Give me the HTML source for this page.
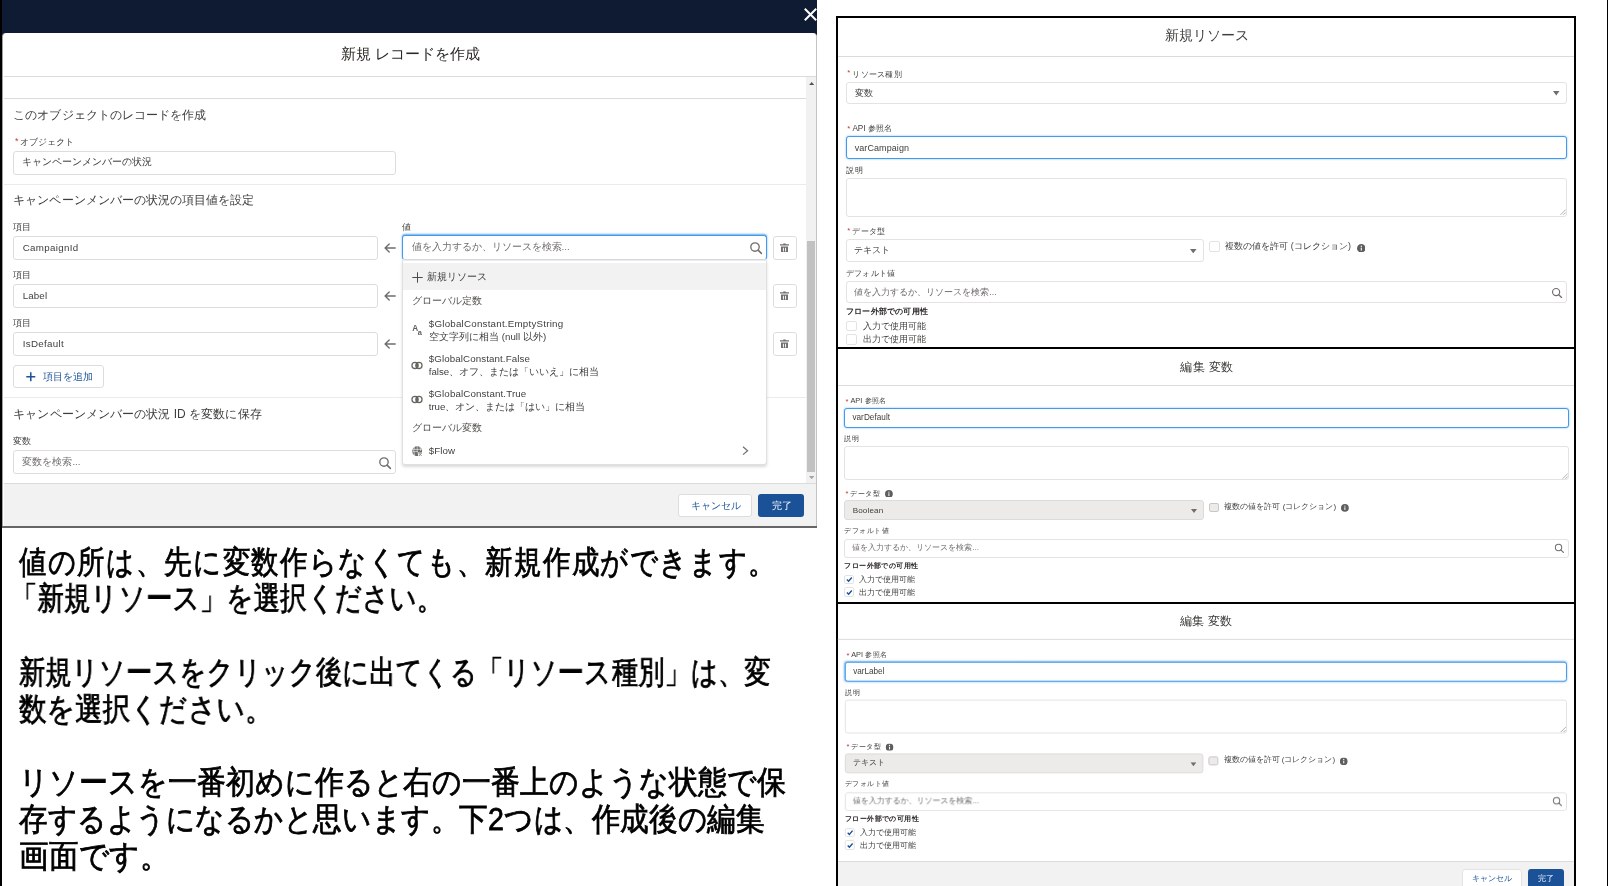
<!DOCTYPE html>
<html lang="ja"><head><meta charset="utf-8"><title>新規 レコードを作成</title>
<style>
html,body{margin:0;padding:0;background:#fff;}
body{width:1608px;height:886px;position:relative;overflow:hidden;font-family:"Liberation Sans",sans-serif;}
#page{position:absolute;left:0;top:0;width:1608px;height:886px;will-change:transform;}
.b{position:absolute;box-sizing:border-box;}
.j{position:absolute;white-space:nowrap;text-align:justify;text-align-last:justify;overflow:visible;}
.l{position:absolute;white-space:nowrap;}
.big{position:absolute;white-space:nowrap;text-align:justify;text-align-last:justify;transform-origin:0 0;font-size:32px;line-height:36px;color:#000;left:19px;-webkit-text-stroke:0.8px #000;}
.inp{border:1px solid #dfdddc;border-radius:3px;background:#fff;}
.foc{border:1px solid #3f9bef;border-radius:3px;background:#fff;box-shadow:0 0 2px rgba(0,112,210,.5);}
.dis{border:1px solid #dddbda;border-radius:3px;background:#ecebea;}
.cb{border:1px solid #e2e0df;border-radius:2px;background:#fff;}
.cbd{border:1px solid #c9c7c5;border-radius:2px;background:#ecebea;}
.req{color:#c23934;}
.r{border-color:#e5e3e2;}
</style></head><body><div id="page">

<section aria-label="新規 レコードを作成"><!-- left: flow builder modal -->
<div class="b" style="left:0.0px;top:0.0px;width:816.5px;height:40.0px;background:#0e1b32;"></div>
<svg class="b" style="left:803.5px;top:8.0px;" width="13.0" height="13.0" viewBox="0 0 13 13"><path d="M0.8 0.8 L12.2 12.2 M12.2 0.8 L0.8 12.2" stroke="#fff" stroke-width="2" stroke-linecap="butt"/></svg>
<div class="b" style="left:2.0px;top:33.0px;width:815.0px;height:495.0px;background:#fff;border-radius:4px 4px 0 0;border-left:1.5px solid #a0a0a0;border-right:1px solid #c4c4c4;"></div>
<div class="b" style="left:2.0px;top:525.6px;width:815.0px;height:2.4px;background:#666;"></div>
<div class="j" style="left:340.6px;top:44.0px;width:139.0px;font-size:15px;line-height:20px;color:#2b2826;">新規 レコードを作成</div>
<div class="b" style="left:3.5px;top:75.5px;width:812.5px;height:1.5px;background:#dddbda;"></div>
<div class="b" style="left:3.5px;top:98.0px;width:802.9px;height:1.0px;background:#dddbda;"></div>
<div class="b" style="left:806.4px;top:77.0px;width:9.6px;height:406.3px;background:#f1f1f1;"></div>
<div class="b" style="left:807.4px;top:240.7px;width:7.6px;height:231.1px;background:#c1c1c1;"></div>
<svg class="b" style="left:808.5px;top:81.5px;" width="5.4" height="3.2" viewBox="0 0 5.4 3.2"><path d="M0 3.2 L2.7 0 L5.4 3.2 Z" fill="#505050"/></svg>
<svg class="b" style="left:808.5px;top:475.8px;" width="5.4" height="3.2" viewBox="0 0 5.4 3.2"><path d="M0 0 L2.7 3.2 L5.4 0 Z" fill="#a3a3a3"/></svg>
<div class="j" style="left:13.3px;top:107.4px;width:193.0px;font-size:12px;line-height:16px;color:#3e3e3c;">このオブジェクトのレコードを作成</div>
<div class="l req" style="left:15px;top:133.7px;font-size:9px;line-height:14px;">*</div>
<div class="j" style="left:19.7px;top:135.0px;width:54.5px;font-size:9px;line-height:14px;color:#3e3e3c;">オブジェクト</div>
<div class="b inp" style="left:13.0px;top:150.5px;width:383.0px;height:24.0px;"></div>
<div class="j" style="left:22.4px;top:154.9px;width:127.8px;font-size:9.7px;line-height:14px;color:#3e3e3c;">キャンペーンメンバーの状況</div>
<div class="b" style="left:3.5px;top:184.2px;width:802.9px;height:1.0px;background:#ecebea;"></div>
<div class="j" style="left:13.3px;top:192.4px;width:241.0px;font-size:12px;line-height:16px;color:#3e3e3c;">キャンペーンメンバーの状況の項目値を設定</div>
<div class="j" style="left:13.3px;top:221.2px;width:17.5px;font-size:8.8px;line-height:12px;color:#3e3e3c;">項目</div>
<div class="b inp" style="left:13.0px;top:236.0px;width:365.0px;height:24.0px;"></div>
<div class="l" style="left:22.7px;top:240.92px;font-size:9.75px;line-height:14px;color:#3e3e3c;letter-spacing:0.313px;">CampaignId</div>
<svg class="b" style="left:384.0px;top:242.8px;" width="12.0" height="10.0" viewBox="0 0 12 10"><path d="M11.2 5 H1.2 M5.2 0.9 L1.1 5 L5.2 9.1" fill="none" stroke="#706e6b" stroke-width="1.35" stroke-linecap="round" stroke-linejoin="round"/></svg>
<div class="b inp" style="left:772.5px;top:236.0px;width:24.0px;height:24.0px;"></div>
<svg class="b" style="left:780.1px;top:242.8px;" width="9.0" height="9.6" viewBox="0 0 9 9.6"><path d="M3.3 1.2 V0.4 H5.7 V1.2 H9 V2.4 H0 V1.2 Z" fill="#706e6b"/><path d="M1 3.6 H8 V9 Q8 9.6 7.4 9.6 H1.6 Q1 9.6 1 9 Z M2.9 4.7 V8.4 H3.9 V4.7 Z M5.1 4.7 V8.4 H6.1 V4.7 Z" fill="#706e6b" fill-rule="evenodd"/></svg>
<div class="j" style="left:13.3px;top:269.2px;width:17.5px;font-size:8.8px;line-height:12px;color:#3e3e3c;">項目</div>
<div class="b inp" style="left:13.0px;top:284.0px;width:365.0px;height:24.0px;"></div>
<div class="l" style="left:22.7px;top:288.92px;font-size:9.75px;line-height:14px;color:#3e3e3c;letter-spacing:0.129px;">Label</div>
<svg class="b" style="left:384.0px;top:290.8px;" width="12.0" height="10.0" viewBox="0 0 12 10"><path d="M11.2 5 H1.2 M5.2 0.9 L1.1 5 L5.2 9.1" fill="none" stroke="#706e6b" stroke-width="1.35" stroke-linecap="round" stroke-linejoin="round"/></svg>
<div class="b inp" style="left:772.5px;top:284.0px;width:24.0px;height:24.0px;"></div>
<svg class="b" style="left:780.1px;top:290.8px;" width="9.0" height="9.6" viewBox="0 0 9 9.6"><path d="M3.3 1.2 V0.4 H5.7 V1.2 H9 V2.4 H0 V1.2 Z" fill="#706e6b"/><path d="M1 3.6 H8 V9 Q8 9.6 7.4 9.6 H1.6 Q1 9.6 1 9 Z M2.9 4.7 V8.4 H3.9 V4.7 Z M5.1 4.7 V8.4 H6.1 V4.7 Z" fill="#706e6b" fill-rule="evenodd"/></svg>
<div class="j" style="left:13.3px;top:317.2px;width:17.5px;font-size:8.8px;line-height:12px;color:#3e3e3c;">項目</div>
<div class="b inp" style="left:13.0px;top:332.0px;width:365.0px;height:24.0px;"></div>
<div class="l" style="left:22.7px;top:336.92px;font-size:9.75px;line-height:14px;color:#3e3e3c;letter-spacing:0.325px;">IsDefault</div>
<svg class="b" style="left:384.0px;top:338.8px;" width="12.0" height="10.0" viewBox="0 0 12 10"><path d="M11.2 5 H1.2 M5.2 0.9 L1.1 5 L5.2 9.1" fill="none" stroke="#706e6b" stroke-width="1.35" stroke-linecap="round" stroke-linejoin="round"/></svg>
<div class="b inp" style="left:772.5px;top:332.0px;width:24.0px;height:24.0px;"></div>
<svg class="b" style="left:780.1px;top:338.8px;" width="9.0" height="9.6" viewBox="0 0 9 9.6"><path d="M3.3 1.2 V0.4 H5.7 V1.2 H9 V2.4 H0 V1.2 Z" fill="#706e6b"/><path d="M1 3.6 H8 V9 Q8 9.6 7.4 9.6 H1.6 Q1 9.6 1 9 Z M2.9 4.7 V8.4 H3.9 V4.7 Z M5.1 4.7 V8.4 H6.1 V4.7 Z" fill="#706e6b" fill-rule="evenodd"/></svg>
<div class="j" style="left:402.4px;top:221.2px;width:8.4px;font-size:8.8px;line-height:12px;color:#3e3e3c;">値</div>
<div class="b foc" style="left:401.5px;top:235.2px;width:365.5px;height:24.8px;border-bottom-color:#d4d9e0;box-shadow:0 -1px 2px rgba(0,112,210,.6);"></div>
<div class="j" style="left:411.6px;top:240.4px;width:155.4px;font-size:9.7px;line-height:14px;color:#706e6b;">値を入力するか、リソースを検索...</div>
<svg class="b" style="left:749.0px;top:241.3px;" width="14.0" height="14.0" viewBox="-6 -6 14 14"><circle cx="0" cy="0" r="4.2" fill="none" stroke="#706e6b" stroke-width="1.35"/><path d="M3.1 3.1 L6.4 6.4" stroke="#706e6b" stroke-width="1.5" stroke-linecap="round"/></svg>
<div class="b inp" style="left:13.0px;top:365.3px;width:91.0px;height:23.2px;"></div>
<svg class="b" style="left:26.3px;top:372.2px;" width="9.6" height="9.6" viewBox="0 0 9.6 9.6"><path d="M4.8 0.3 V9.3 M0.3 4.8 H9.3" stroke="#1b5297" stroke-width="1.5"/></svg>
<div class="j" style="left:42.8px;top:369.9px;width:48.7px;font-size:9.7px;line-height:14px;color:#1b5297;">項目を追加</div>
<div class="b" style="left:3.5px;top:397.2px;width:802.9px;height:1.0px;background:#ecebea;"></div>
<div class="j" style="left:13.3px;top:406.3px;width:248.3px;font-size:12px;line-height:16px;color:#3e3e3c;">キャンペーンメンバーの状況 ID を変数に保存</div>
<div class="j" style="left:13.3px;top:434.6px;width:17.9px;font-size:8.8px;line-height:12px;color:#3e3e3c;">変数</div>
<div class="b inp" style="left:13.0px;top:450.0px;width:383.0px;height:24.0px;"></div>
<div class="j" style="left:22.4px;top:454.7px;width:57.6px;font-size:9.7px;line-height:14px;color:#706e6b;">変数を検索...</div>
<svg class="b" style="left:378.3px;top:455.6px;" width="14.0" height="14.0" viewBox="-6 -6 14 14"><circle cx="0" cy="0" r="4.2" fill="none" stroke="#706e6b" stroke-width="1.35"/><path d="M3.1 3.1 L6.4 6.4" stroke="#706e6b" stroke-width="1.5" stroke-linecap="round"/></svg>
<div class="b" style="left:3.5px;top:483.2px;width:812.5px;height:42.6px;background:#f3f2f2;border-top:1.8px solid #dddbda;"></div>
<div class="b inp" style="left:678.0px;top:494.0px;width:74.2px;height:23.0px;border-radius:3px;"></div>
<div class="j" style="left:690.8px;top:498.6px;width:48.5px;font-size:9.7px;line-height:14px;color:#1b5297;">キャンセル</div>
<div class="b" style="left:758.3px;top:494.0px;width:45.7px;height:23.0px;background:#1b5297;border-radius:3px;"></div>
<div class="j" style="left:771.5px;top:498.6px;width:19.3px;font-size:9.7px;line-height:14px;color:#fff;">完了</div>
<div class="b" style="left:402.0px;top:260.2px;width:365.2px;height:204.4px;background:#fff;border:1px solid #e2e0df;border-top-color:#ececec;border-radius:0 0 3px 3px;box-shadow:0 2px 3px rgba(0,0,0,.15);"></div>
<div class="b" style="left:403.0px;top:263.2px;width:363.2px;height:26.8px;background:#f3f2f2;"></div>
<svg class="b" style="left:412.0px;top:272.0px;" width="11.0" height="11.0" viewBox="0 0 11 11"><path d="M5.5 0.3 V10.7 M0.3 5.5 H10.7" stroke="#4a4a48" stroke-width="1"/></svg>
<div class="j" style="left:427.0px;top:269.6px;width:58.6px;font-size:9.7px;line-height:14px;color:#3e3e3c;">新規リソース</div>
<div class="j" style="left:411.6px;top:294.0px;width:67.6px;font-size:9.6px;line-height:14px;color:#54524f;">グローバル定数</div>
<div class="l" style="left:412.2px;top:323.6px;font-size:8.2px;line-height:10px;font-weight:bold;color:#5f5d5b;">A</div>
<div class="l" style="left:417.8px;top:328.2px;font-size:7.4px;line-height:10px;font-weight:bold;color:#5f5d5b;">a</div>
<div class="l" style="left:428.8px;top:317.02px;font-size:9.75px;line-height:14px;color:#3e3e3c;letter-spacing:0.228px;">$GlobalConstant.EmptyString</div>
<div class="j" style="left:428.7px;top:330.1px;width:117.5px;font-size:9.7px;line-height:13px;color:#3e3e3c;">空文字列に相当 (null 以外)</div>
<svg class="b" style="left:411.0px;top:361.0px;" width="12.0" height="9.0" viewBox="0 0 12 9"><circle cx="4.05" cy="4.5" r="3.1" fill="none" stroke="#67655f" stroke-width="1.25"/><circle cx="7.95" cy="4.5" r="3.1" fill="none" stroke="#67655f" stroke-width="1.25"/><path d="M6 2.09 A3.1 3.1 0 0 1 6 6.91 A3.1 3.1 0 0 1 6 2.09 Z" fill="#67655f"/></svg>
<div class="l" style="left:428.8px;top:351.72px;font-size:9.75px;line-height:14px;color:#3e3e3c;letter-spacing:0.096px;">$GlobalConstant.False</div>
<div class="j" style="left:428.7px;top:365.2px;width:167.7px;font-size:9.7px;line-height:13px;color:#3e3e3c;">false、オフ、または「いいえ」に相当</div>
<svg class="b" style="left:411.0px;top:395.4px;" width="12.0" height="9.0" viewBox="0 0 12 9"><circle cx="4.05" cy="4.5" r="3.1" fill="none" stroke="#67655f" stroke-width="1.25"/><circle cx="7.95" cy="4.5" r="3.1" fill="none" stroke="#67655f" stroke-width="1.25"/><path d="M6 2.09 A3.1 3.1 0 0 1 6 6.91 A3.1 3.1 0 0 1 6 2.09 Z" fill="#67655f"/></svg>
<div class="l" style="left:428.8px;top:386.72px;font-size:9.75px;line-height:14px;color:#3e3e3c;letter-spacing:0.129px;">$GlobalConstant.True</div>
<div class="j" style="left:428.7px;top:399.8px;width:155.4px;font-size:9.7px;line-height:13px;color:#3e3e3c;">true、オン、または「はい」に相当</div>
<div class="j" style="left:411.6px;top:421.1px;width:67.6px;font-size:9.6px;line-height:14px;color:#54524f;">グローバル変数</div>
<svg class="b" style="left:411.7px;top:445.7px;" width="10.4" height="10.4" viewBox="0 0 10.4 10.4"><circle cx="5.2" cy="5.2" r="5" fill="#706e6b"/><path d="M0.6 3.4 H9.8 M0.3 5.6 H6 M5.2 0.2 V6 M2.4 0.8 Q1.2 5.2 2.6 9.6 M7.8 0.8 Q8.8 3 8.6 5" stroke="#fff" stroke-width="0.55" fill="none"/><path d="M5.6 6.2 H10.4 V10.4 H6.4 Z" fill="#fff"/><path d="M6.4 7 H10 M8.2 6.4 V7 M6.9 10.2 L9.4 7.2 M7 7.3 L9.9 10.2" stroke="#706e6b" stroke-width="0.7" fill="none"/></svg>
<div class="l" style="left:428.8px;top:444.02px;font-size:9.75px;line-height:14px;color:#3e3e3c;letter-spacing:0.078px;">$Flow</div>
<svg class="b" style="left:742.4px;top:446.2px;" width="7.0" height="9.4" viewBox="0 0 7 9.4"><path d="M1 0.8 L5.6 4.7 L1 8.6" fill="none" stroke="#706e6b" stroke-width="1.2"/></svg>
<div class="b" style="left:0.0px;top:0.0px;width:2.2px;height:886.0px;background:#000;"></div>
</section><section aria-label="説明"><!-- explanatory text -->
<div class="big" style="top:543.6px;width:881.3px;transform:scaleX(0.8585);">値の所は、先に変数作らなくても、新規作成ができます。</div>
<div class="big" style="top:580.4px;width:522.2px;transform:scaleX(0.8280);left:11px;">「新規リソース」を選択ください。</div>
<div class="big" style="top:653.9px;width:913.9px;transform:scaleX(0.8224);">新規リソースをクリック後に出てくる「リソース種別」は、変</div>
<div class="big" style="top:690.7px;width:293.8px;transform:scaleX(0.8626);">数を選択ください。</div>
<div class="big" style="top:764.3px;width:848.6px;transform:scaleX(0.9038);">リソースを一番初めに作ると右の一番上のような状態で保</div>
<div class="big" style="top:801.1px;width:834.2px;transform:scaleX(0.8936);">存するようになるかと思います。下2つは、作成後の編集</div>
<div class="big" style="top:837.8px;width:163.2px;transform:scaleX(0.9240);">画面です。</div>
</section><section aria-label="新規リソース / 編集 変数"><!-- right: resource dialogs -->
<div class="b" style="left:836.0px;top:15.5px;width:740.1px;height:884.5px;border:2px solid #000;background:#fff;"></div>
<div class="b" style="left:1606.5px;top:0.0px;width:1.5px;height:886.0px;background:#000;"></div>
<div class="j" style="left:1164.8px;top:27.3px;width:82.7px;font-size:13.8px;line-height:18px;color:#3e3e3c;">新規リソース</div>
<div class="b" style="left:838.2px;top:55.8px;width:736.0px;height:1.2px;background:#dddbda;"></div>
<div class="l req" style="left:847.2px;top:67.2px;font-size:7.8px;line-height:12px;">*</div>
<div class="j" style="left:852.4px;top:69.2px;width:49.2px;font-size:8.2px;line-height:12px;color:#3e3e3c;">リソース種別</div>
<div class="b inp r" style="left:846.0px;top:82.0px;width:720.6px;height:21.6px;"></div>
<div class="j" style="left:854.9px;top:86.9px;width:17.7px;font-size:8.9px;line-height:12px;color:#3e3e3c;">変数</div>
<svg class="b" style="left:1553.0px;top:91.2px;" width="6.5" height="4.4" viewBox="0 0 6.5 4.4"><path d="M0 0 H6.5 L3.25 4.4 Z" fill="#706e6b"/></svg>
<div class="l req" style="left:847.2px;top:123.1px;font-size:7.8px;line-height:12px;">*</div>
<div class="j" style="left:852.4px;top:123.3px;width:39.8px;font-size:8.2px;line-height:12px;color:#3e3e3c;">API 参照名</div>
<div class="b foc" style="left:845.5px;top:136.0px;width:721.5px;height:23.1px;"></div>
<div class="l" style="left:854.7px;top:141.18px;font-size:9px;line-height:14px;color:#3e3e3c;letter-spacing:0.079px;">varCampaign</div>
<div class="j" style="left:845.8px;top:165.0px;width:16.8px;font-size:8.2px;line-height:12px;color:#3e3e3c;">説明</div>
<div class="b inp r" style="left:845.5px;top:178.4px;width:721.5px;height:38.4px;"></div>
<svg class="b" style="left:1559.5px;top:209.3px;" width="6.0" height="6.0" viewBox="0 0 6 6"><path d="M0.5 5.8 L5.8 0.5 M3.4 5.8 L5.8 3.4" stroke="#9a9a9a" stroke-width="0.8"/></svg>
<div class="l req" style="left:847.2px;top:225.4px;font-size:7.8px;line-height:12px;">*</div>
<div class="j" style="left:852.4px;top:225.8px;width:32.6px;font-size:8.2px;line-height:12px;color:#3e3e3c;">データ型</div>
<div class="b inp r" style="left:845.5px;top:239.2px;width:358.3px;height:22.5px;"></div>
<div class="j" style="left:854.3px;top:243.6px;width:35.9px;font-size:9px;line-height:12px;color:#3e3e3c;">テキスト</div>
<svg class="b" style="left:1190.0px;top:248.8px;" width="6.5" height="4.4" viewBox="0 0 6.5 4.4"><path d="M0 0 H6.5 L3.25 4.4 Z" fill="#706e6b"/></svg>
<div class="b cb r" style="left:1209.0px;top:241.1px;width:11.2px;height:10.9px;"></div>
<div class="j" style="left:1225.3px;top:240.2px;width:125.6px;font-size:8.9px;line-height:12px;color:#3e3e3c;">複数の値を許可 (コレクション)</div>
<svg class="b" style="left:1356.7px;top:243.7px;" width="8.6" height="8.6" viewBox="-5 -5 10 10"><circle r="5" fill="#605e5c"/><rect x="-0.65" y="-0.8" width="1.3" height="3.4" fill="#fff"/><circle cx="0" cy="-2.4" r="0.8" fill="#fff"/></svg>
<div class="j" style="left:845.8px;top:268.0px;width:49.4px;font-size:8.2px;line-height:12px;color:#3e3e3c;">デフォルト値</div>
<div class="b inp r" style="left:845.5px;top:280.8px;width:721.5px;height:21.8px;"></div>
<div class="j" style="left:854.3px;top:286.2px;width:140.9px;font-size:8.9px;line-height:12px;color:#706e6b;">値を入力するか、リソースを検索...</div>
<svg class="b" style="left:1550.7px;top:286.5px;" width="11.9" height="11.9" viewBox="-6 -6 14 14"><circle cx="0" cy="0" r="4.2" fill="none" stroke="#706e6b" stroke-width="1.35"/><path d="M3.1 3.1 L6.4 6.4" stroke="#706e6b" stroke-width="1.5" stroke-linecap="round"/></svg>
<div class="j" style="left:845.8px;top:305.7px;width:82.2px;font-size:8.2px;line-height:12px;color:#2b2826;font-weight:bold;">フロー外部での可用性</div>
<div class="b cb r" style="left:846.0px;top:320.5px;width:10.8px;height:10.8px;"></div>
<div class="j" style="left:862.6px;top:320.0px;width:62.0px;font-size:8.9px;line-height:12px;color:#3e3e3c;">入力で使用可能</div>
<div class="b cb r" style="left:846.0px;top:334.0px;width:10.8px;height:10.8px;"></div>
<div class="j" style="left:862.6px;top:333.2px;width:62.0px;font-size:8.9px;line-height:12px;color:#3e3e3c;">出力で使用可能</div>
<div class="b" style="left:838.2px;top:347.3px;width:736.0px;height:2.0px;background:#000;"></div>
<div class="j" style="left:1180.4px;top:359.0px;width:52.4px;font-size:12.3px;line-height:16px;color:#3e3e3c;">編集 変数</div>
<div class="b" style="left:838.2px;top:385.2px;width:736.0px;height:1.1px;background:#dddbda;"></div>
<div class="l req" style="left:845.6px;top:396.2px;font-size:7.6px;line-height:12px;">*</div>
<div class="j" style="left:850.4px;top:395.4px;width:36.0px;font-size:7.4px;line-height:12px;color:#3e3e3c;">API 参照名</div>
<div class="b foc" style="left:843.6px;top:408.0px;width:725.4px;height:19.8px;"></div>
<div class="l" style="left:852.4px;top:411.46px;font-size:8.2px;line-height:14px;color:#3e3e3c;letter-spacing:0.043px;">varDefault</div>
<div class="j" style="left:844.2px;top:433.1px;width:15.0px;font-size:7.4px;line-height:12px;color:#3e3e3c;">説明</div>
<div class="b inp r" style="left:843.6px;top:445.9px;width:725.4px;height:34.5px;"></div>
<svg class="b" style="left:1561.5px;top:472.9px;" width="6.0" height="6.0" viewBox="0 0 6 6"><path d="M0.5 5.8 L5.8 0.5 M3.4 5.8 L5.8 3.4" stroke="#9a9a9a" stroke-width="0.8"/></svg>
<div class="l req" style="left:845.6px;top:487.8px;font-size:7.6px;line-height:12px;">*</div>
<div class="j" style="left:850.4px;top:488.0px;width:29.6px;font-size:7.4px;line-height:12px;color:#3e3e3c;">データ型</div>
<svg class="b" style="left:885.2px;top:489.7px;" width="7.8" height="7.8" viewBox="-5 -5 10 10"><circle r="5" fill="#605e5c"/><rect x="-0.65" y="-0.8" width="1.3" height="3.4" fill="#fff"/><circle cx="0" cy="-2.4" r="0.8" fill="#fff"/></svg>
<div class="b dis" style="left:843.6px;top:500.2px;width:360.2px;height:19.8px;"></div>
<div class="l" style="left:852.7px;top:503.59px;font-size:8.1px;line-height:14px;color:#3e3e3c;letter-spacing:0.125px;">Boolean</div>
<svg class="b" style="left:1191.0px;top:508.8px;" width="6.0" height="4.0" viewBox="0 0 6 4"><path d="M0 0 H6 L3.0 4 Z" fill="#706e6b"/></svg>
<div class="b cbd" style="left:1209.4px;top:502.6px;width:10.0px;height:9.6px;"></div>
<div class="j" style="left:1224.3px;top:501.2px;width:111.9px;font-size:8px;line-height:12px;color:#3e3e3c;">複数の値を許可 (コレクション)</div>
<svg class="b" style="left:1341.4px;top:504.3px;" width="7.8" height="7.8" viewBox="-5 -5 10 10"><circle r="5" fill="#605e5c"/><rect x="-0.65" y="-0.8" width="1.3" height="3.4" fill="#fff"/><circle cx="0" cy="-2.4" r="0.8" fill="#fff"/></svg>
<div class="j" style="left:844.2px;top:525.2px;width:44.4px;font-size:7.4px;line-height:12px;color:#3e3e3c;">デフォルト値</div>
<div class="b inp r" style="left:843.6px;top:538.5px;width:725.4px;height:19.3px;"></div>
<div class="j" style="left:852.3px;top:541.9px;width:126.2px;font-size:8px;line-height:12px;color:#706e6b;">値を入力するか、リソースを検索...</div>
<svg class="b" style="left:1554.0px;top:542.8px;" width="10.6" height="10.6" viewBox="-6 -6 14 14"><circle cx="0" cy="0" r="4.2" fill="none" stroke="#706e6b" stroke-width="1.35"/><path d="M3.1 3.1 L6.4 6.4" stroke="#706e6b" stroke-width="1.5" stroke-linecap="round"/></svg>
<div class="j" style="left:844.2px;top:559.5px;width:74.0px;font-size:7.4px;line-height:12px;color:#2b2826;font-weight:bold;">フロー外部での可用性</div>
<div class="b cb r" style="left:844.4px;top:574.6px;width:9.6px;height:9.6px;"></div>
<svg class="b" style="left:844.9px;top:575.2px;" width="8.6" height="8.6" viewBox="0 0 10 10"><path d="M2.2 5.3 L4.2 7.3 L7.9 2.9" fill="none" stroke="#1b5297" stroke-width="1.6"/></svg>
<div class="j" style="left:859.4px;top:573.9px;width:55.8px;font-size:8px;line-height:12px;color:#3e3e3c;">入力で使用可能</div>
<div class="b cb r" style="left:844.4px;top:587.2px;width:9.6px;height:9.6px;"></div>
<svg class="b" style="left:844.9px;top:587.8px;" width="8.6" height="8.6" viewBox="0 0 10 10"><path d="M2.2 5.3 L4.2 7.3 L7.9 2.9" fill="none" stroke="#1b5297" stroke-width="1.6"/></svg>
<div class="j" style="left:859.4px;top:586.5px;width:55.8px;font-size:8px;line-height:12px;color:#3e3e3c;">出力で使用可能</div>
<div class="b" style="left:838.2px;top:601.6px;width:736.0px;height:2.1px;background:#000;"></div>
<div style="position:absolute;left:0;top:0;width:1608px;height:886px;transform-origin:844.2px 602.3px;transform:translate(0.8px,0) scale(0.9961);">
<div class="j" style="left:1180.4px;top:613.0px;width:52.4px;font-size:12.3px;line-height:16px;color:#3e3e3c;">編集 変数</div>
<div class="b" style="left:837.4px;top:639.2px;width:738.8px;height:1.1px;background:#dddbda;"></div>
<div class="l req" style="left:845.6px;top:650.2px;font-size:7.6px;line-height:12px;">*</div>
<div class="j" style="left:850.4px;top:649.4px;width:36.0px;font-size:7.4px;line-height:12px;color:#3e3e3c;">API 参照名</div>
<div class="b foc" style="left:843.6px;top:662.0px;width:725.4px;height:19.8px;"></div>
<div class="l" style="left:852.4px;top:665.46px;font-size:8.2px;line-height:14px;color:#3e3e3c;letter-spacing:-0.019px;">varLabel</div>
<div class="j" style="left:844.2px;top:687.1px;width:15.0px;font-size:7.4px;line-height:12px;color:#3e3e3c;">説明</div>
<div class="b inp r" style="left:843.6px;top:699.9px;width:725.4px;height:34.5px;"></div>
<svg class="b" style="left:1561.5px;top:726.9px;" width="6.0" height="6.0" viewBox="0 0 6 6"><path d="M0.5 5.8 L5.8 0.5 M3.4 5.8 L5.8 3.4" stroke="#9a9a9a" stroke-width="0.8"/></svg>
<div class="l req" style="left:845.6px;top:741.8px;font-size:7.6px;line-height:12px;">*</div>
<div class="j" style="left:850.4px;top:742.0px;width:29.6px;font-size:7.4px;line-height:12px;color:#3e3e3c;">データ型</div>
<svg class="b" style="left:885.2px;top:743.7px;" width="7.8" height="7.8" viewBox="-5 -5 10 10"><circle r="5" fill="#605e5c"/><rect x="-0.65" y="-0.8" width="1.3" height="3.4" fill="#fff"/><circle cx="0" cy="-2.4" r="0.8" fill="#fff"/></svg>
<div class="b dis" style="left:843.6px;top:754.2px;width:360.2px;height:19.8px;"></div>
<div class="j" style="left:852.6px;top:758.1px;width:32.2px;font-size:8.1px;line-height:12px;color:#3e3e3c;">テキスト</div>
<svg class="b" style="left:1191.0px;top:762.8px;" width="6.0" height="4.0" viewBox="0 0 6 4"><path d="M0 0 H6 L3.0 4 Z" fill="#706e6b"/></svg>
<div class="b cbd" style="left:1209.4px;top:756.6px;width:10.0px;height:9.6px;"></div>
<div class="j" style="left:1224.3px;top:755.2px;width:111.9px;font-size:8px;line-height:12px;color:#3e3e3c;">複数の値を許可 (コレクション)</div>
<svg class="b" style="left:1341.4px;top:758.3px;" width="7.8" height="7.8" viewBox="-5 -5 10 10"><circle r="5" fill="#605e5c"/><rect x="-0.65" y="-0.8" width="1.3" height="3.4" fill="#fff"/><circle cx="0" cy="-2.4" r="0.8" fill="#fff"/></svg>
<div class="j" style="left:844.2px;top:779.2px;width:44.4px;font-size:7.4px;line-height:12px;color:#3e3e3c;">デフォルト値</div>
<div class="b inp r" style="left:843.6px;top:792.5px;width:725.4px;height:19.3px;"></div>
<div class="j" style="left:852.3px;top:795.9px;width:126.2px;font-size:8px;line-height:12px;color:#706e6b;">値を入力するか、リソースを検索...</div>
<svg class="b" style="left:1554.0px;top:796.8px;" width="10.6" height="10.6" viewBox="-6 -6 14 14"><circle cx="0" cy="0" r="4.2" fill="none" stroke="#706e6b" stroke-width="1.35"/><path d="M3.1 3.1 L6.4 6.4" stroke="#706e6b" stroke-width="1.5" stroke-linecap="round"/></svg>
<div class="j" style="left:844.2px;top:813.5px;width:74.0px;font-size:7.4px;line-height:12px;color:#2b2826;font-weight:bold;">フロー外部での可用性</div>
<div class="b cb r" style="left:844.4px;top:828.6px;width:9.6px;height:9.6px;"></div>
<svg class="b" style="left:844.9px;top:829.2px;" width="8.6" height="8.6" viewBox="0 0 10 10"><path d="M2.2 5.3 L4.2 7.3 L7.9 2.9" fill="none" stroke="#1b5297" stroke-width="1.6"/></svg>
<div class="j" style="left:859.4px;top:827.9px;width:55.8px;font-size:8px;line-height:12px;color:#3e3e3c;">入力で使用可能</div>
<div class="b cb r" style="left:844.4px;top:841.2px;width:9.6px;height:9.6px;"></div>
<svg class="b" style="left:844.9px;top:841.8px;" width="8.6" height="8.6" viewBox="0 0 10 10"><path d="M2.2 5.3 L4.2 7.3 L7.9 2.9" fill="none" stroke="#1b5297" stroke-width="1.6"/></svg>
<div class="j" style="left:859.4px;top:840.5px;width:55.8px;font-size:8px;line-height:12px;color:#3e3e3c;">出力で使用可能</div>
</div>
<div class="b" style="left:838.2px;top:860.8px;width:736.0px;height:25.2px;background:#f3f2f2;border-top:1.4px solid #dddbda;"></div>
<div class="b inp r" style="left:1462.2px;top:869.2px;width:60.2px;height:22.8px;border-radius:3px;"></div>
<div class="j" style="left:1472.0px;top:872.8px;width:40.2px;font-size:8px;line-height:12px;color:#1b5297;">キャンセル</div>
<div class="b" style="left:1527.6px;top:869.2px;width:36.6px;height:22.8px;background:#1b5297;border-radius:3px;"></div>
<div class="j" style="left:1537.7px;top:872.8px;width:15.9px;font-size:8px;line-height:12px;color:#fff;">完了</div>
</section></div></body></html>
